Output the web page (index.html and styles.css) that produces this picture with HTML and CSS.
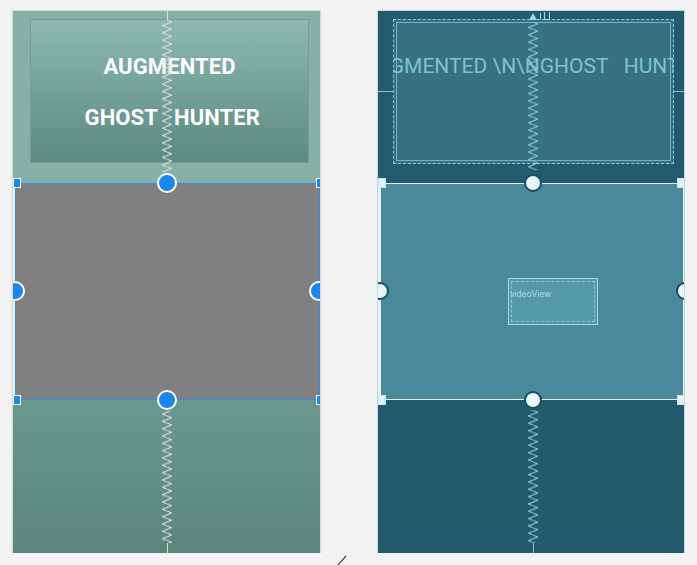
FILE: index.html
```html
<!DOCTYPE html>
<html lang="en">
<head>
    <meta charset="UTF-8">
    <meta name="viewport" content="width=device-width, initial-scale=1.0">
    <title>Layout Editor</title>
    <link rel="stylesheet" href="styles.css">
</head>
<body>

    <div class="editor">

        <!-- Design view -->
        <div class="panel design">
            <div class="top">
                <div class="textview">
                    <p class="title">AUGMENTED

 GHOST   HUNTER</p>
                </div>
            </div>
            <div class="middle"></div>
            <div class="bottom"></div>

            <svg class="guides" width="307" height="542">
                <defs>
                    <pattern id="zz-design" patternUnits="userSpaceOnUse" x="149" y="9" width="10" height="7.33">
                        <polyline points="5,0 9.5,1.83 0.5,5.5 5,7.33" fill="none" stroke="#d8dedc" stroke-width="1.1"/>
                    </pattern>
                </defs>
                <line x1="154.5" y1="0" x2="154.5" y2="9" stroke="#d8dedc"/>
                <rect x="149" y="9" width="10" height="152" fill="url(#zz-design)"/>
                <rect x="149" y="400" width="10" height="132" fill="url(#zz-design)"/>
                <line x1="154.5" y1="532" x2="154.5" y2="542" stroke="#d8dedc"/>
            </svg>

            <span class="handle dot" style="left:144px;top:162px"></span>
            <span class="handle dot" style="left:144px;top:379px"></span>
            <span class="handle dot" style="left:-8px;top:270px"></span>
            <span class="handle dot" style="left:296px;top:270px"></span>
            <span class="handle sq" style="left:0;top:167px"></span>
            <span class="handle sq" style="left:303px;top:167px"></span>
            <span class="handle sq" style="left:0;top:384px"></span>
            <span class="handle sq" style="left:303px;top:384px"></span>
        </div>

        <!-- Blueprint view -->
        <div class="panel blueprint">
            <div class="top">
                <div class="textview">
                    <p class="title">AUGMENTED \N\NGHOST   HUNTER</p>
                </div>
            </div>
            <div class="middle">
                <div class="video-box">videoView</div>
            </div>
            <div class="bottom"></div>

            <svg class="guides" width="306" height="542">
                <defs>
                    <pattern id="zz-blue" patternUnits="userSpaceOnUse" x="150" y="11" width="10" height="7.33">
                        <polyline points="5,0 9.5,1.83 0.5,5.5 5,7.33" fill="none" stroke="#86c8d8" stroke-width="1.1"/>
                    </pattern>
                </defs>
                <polygon points="151,9 155,2 159,9" fill="#9fd6e3"/>
                <line x1="162.5" y1="2" x2="162.5" y2="8" stroke="#9fd6e3"/>
                <line x1="166.5" y1="1" x2="166.5" y2="8" stroke="#9fd6e3"/>
                <line x1="171.5" y1="1" x2="171.5" y2="8" stroke="#9fd6e3"/>
                <line x1="166" y1="8.5" x2="172" y2="8.5" stroke="#9fd6e3"/>
                <rect x="150" y="11" width="10" height="148" fill="url(#zz-blue)"/>
                <rect x="150" y="399" width="10" height="133" fill="url(#zz-blue)"/>
                <line x1="155.5" y1="532" x2="155.5" y2="542" stroke="#86c8d8"/>
                <line x1="0" y1="80.5" x2="15" y2="80.5" stroke="#80c4d4"/>
                <line x1="296" y1="80.5" x2="306" y2="80.5" stroke="#80c4d4"/>
            </svg>

            <span class="handle dot" style="left:146px;top:163px"></span>
            <span class="handle dot" style="left:146px;top:380px"></span>
            <span class="handle dot" style="left:-7px;top:271px"></span>
            <span class="handle dot" style="left:298px;top:271px"></span>
            <span class="handle sq" style="left:0;top:167px"></span>
            <span class="handle sq" style="left:299px;top:167px"></span>
            <span class="handle sq" style="left:0;top:384px"></span>
            <span class="handle sq" style="left:299px;top:384px"></span>
        </div>

    </div>

    <svg class="resize-grip" width="12" height="10">
        <line x1="10" y1="1" x2="2" y2="10" stroke="#4c4c4c" stroke-width="1.2"/>
    </svg>

</body>
</html>
```

FILE: styles.css
```css
body {
    font-family: Roboto, "Liberation Sans", sans-serif;
    background-color: #f3f3f3;
    margin: 0;
    padding: 0;
}
/* Editor surface */
.editor {
    display: flex;
    gap: 58px;
    padding: 11px 0 0 13px;
}
.panel {
    position: relative;
    width: 307px;
    height: 542px;
    flex: none;
    overflow: hidden;
    display: flex;
    flex-direction: column;
}
.top {
    height: 172px;
    flex: none;
    box-sizing: border-box;
}
.textview {
    box-sizing: border-box;
    overflow: hidden;
    padding-top: 34px;
}
.title {
    margin: 0;
    font-size: 22px;
    line-height: 25.5px;
    white-space: pre;
}
.middle {
    height: 217px;
    flex: none;
    box-sizing: border-box;
    margin-left: 2px;
    border: 1px solid;
}
.bottom {
    flex: 1;
}
.guides {
    position: absolute;
    left: 0;
    top: 0;
    z-index: 1;
}
.handle {
    position: absolute;
    box-sizing: border-box;
    z-index: 2;
}
/* Design view */
.design {
    box-shadow: 0 0 0 1px #d6d9d8, 0 1px 3px rgba(0, 0, 0, 0.18);
}
.design .top {
    background: #85b1a8;
    padding: 8px 11px 0 17px;
}
.design .textview {
    height: 144px;
    background: linear-gradient(#8db9b0, #5b8a80);
    border: 1px solid #739d95;
    text-align: center;
}
.design .title {
    color: #fff;
    font-weight: bold;
    letter-spacing: 0.1px;
}
.design .middle {
    background: #808080;
    border-color: #2f8cef;
}
.design .bottom {
    background: linear-gradient(#6a988f, #5a867c);
}
.design .dot {
    width: 20px;
    height: 20px;
    border-radius: 50%;
    border: 2px solid #fff;
    background: #1b86f0;
}
.design .sq {
    width: 8px;
    height: 10px;
    border: 1px solid #fff;
    background: #1b86f0;
}
/* Blueprint view */
.blueprint {
    width: 306px;
    box-shadow: 0 0 0 1px #bcdbe4;
}
.blueprint .top {
    background: #235a6d;
    padding: 8px 10px 0 15px;
}
.blueprint .textview {
    height: 145px;
    background: #37707f;
    border: 1px dashed #8ccad8;
    outline: 1px solid rgba(140, 202, 216, 0.75);
    outline-offset: -4px;
    display: flex;
    justify-content: center;
}
.blueprint .title {
    color: #7fc3d3;
    font-size: 21px;
}
.blueprint .middle {
    background: #4a899c;
    border-color: #dff1f6;
    padding: 94px 0 0 127px;
}
.blueprint .bottom {
    background: #225a6c;
}
.video-box {
    width: 90px;
    height: 47px;
    box-sizing: border-box;
    background: #5598aa;
    border: 1px solid #a6dbe6;
    outline: 1px dashed rgba(166, 219, 230, 0.7);
    outline-offset: -4px;
    font-size: 9px;
    line-height: 10px;
    color: #a9dde9;
    padding: 10px 0 0 1px;
}
.blueprint .dot {
    width: 18px;
    height: 18px;
    border-radius: 50%;
    border: 2px solid #1c4d5e;
    background: #eaf7fa;
}
.blueprint .sq {
    width: 8px;
    height: 10px;
    border: 1px solid #c7e6ee;
    background: #e3f4f8;
}
.resize-grip {
    position: absolute;
    left: 336px;
    top: 555px;
}
```
